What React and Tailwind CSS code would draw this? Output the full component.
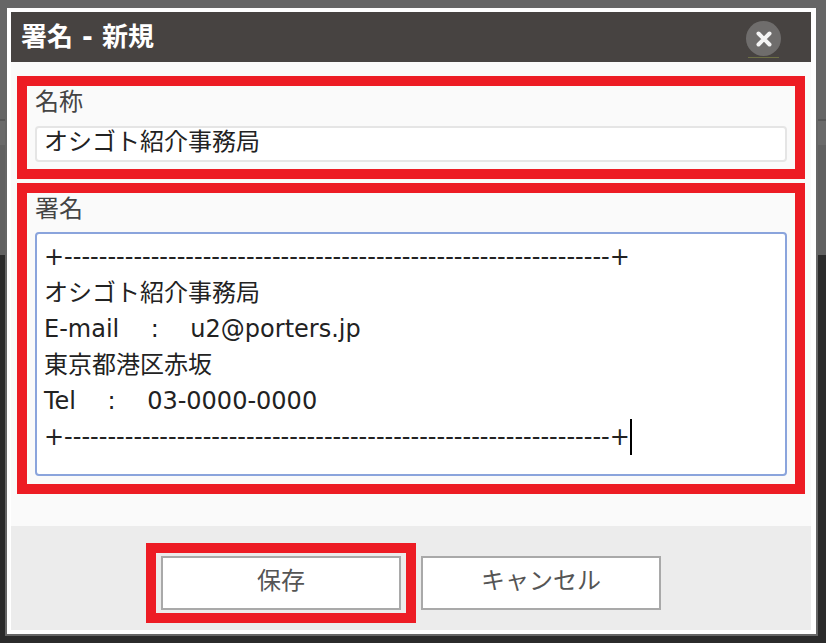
const redBox = 'border-[10px] border-[#ed1c24]';
const actionButton = 'h-[54px] w-[240px] border-2 border-[#a9a9a9] bg-white pb-[4px] text-[24px] text-[#555]';
const dashes = '+' + '-'.repeat(63) + '+';

function Field({ label, boxClass, children }) {
  return (
    <section className={`${redBox} ${boxClass} flex flex-col px-2`}>
      <label className="h-9 text-[24px] leading-[32px] text-[#444]">{label}</label>
      {children}
    </section>
  );
}

function CloseButton() {
  return (
    <button className="relative mt-[3px] flex h-[35px] w-[35px] items-center justify-center rounded-full bg-[#6f6d6c]">
      <svg width="20" height="20" viewBox="0 0 20 20" fill="none" stroke="#f4f4f4" strokeWidth="4" strokeLinecap="round">
        <path d="M4.5 4.5 L15.5 15.5 M15.5 4.5 L4.5 15.5" />
      </svg>
      <span className="absolute -bottom-[2px] left-[2px] h-px w-[31px] bg-[#6d6f45]" />
    </button>
  );
}

export default function App() {
  const lines = [
    dashes,
    'オシゴト紹介事務局',
    'E-mail    :    u2@porters.jp',
    '東京都港区赤坂',
    'Tel    :    03-0000-0000',
  ];

  return (
    <div className="relative flex h-screen flex-col overflow-hidden bg-[#2b2b2b] font-['DejaVu_Sans','Noto_Sans_CJK_JP',sans-serif]">
      {/* dimmed page behind the dialog */}
      <div className="h-[119px] bg-[#666]" />
      <div className="h-[2px] bg-[#575757]" />
      <div className="h-[24px] bg-[#6a6a6a]" />
      <div className="h-[110px] bg-[#616161]" />

      <div className="absolute left-[5px] top-[6px] h-[630px] w-[813px] border-2 border-[#666] bg-white pt-1 pr-[5px] pb-1 pl-1">
        <div className="flex h-full flex-col bg-[#fafafa]">
          <header className="flex h-[50px] shrink-0 items-center justify-between bg-[#474341] pr-[30px] pl-[10px]">
            <h1 className="text-[26px] font-bold text-white">署名 - 新規</h1>
            <CloseButton />
          </header>

          <div className="flex flex-1 flex-col gap-1 px-[6px] pt-[14px]">
            <Field label="名称" boxClass="h-[103px] w-[788px]">
              <input
                readOnly
                value="オシゴト紹介事務局"
                className="mt-[4px] h-9 w-full rounded border-2 border-[#e5e5e5] bg-white px-[7px] pb-1 text-[24px] text-[#222] outline-none"
              />
            </Field>
            <Field label="署名" boxClass="h-[311px] w-[788px]">
              <div className="mt-[3px] h-[244px] w-full rounded border-2 border-[#8aa4dc] bg-white px-[7px] pt-[5px] text-[24px] leading-[36px] [word-spacing:0.25px] text-[#222]">
                {lines.map((line) => (
                  <div key={line} className="whitespace-pre">{line}</div>
                ))}
                <div className="flex whitespace-pre">
                  {dashes}
                  <span className="h-9 w-0.5 bg-black" />
                </div>
              </div>
            </Field>
          </div>

          <footer className="flex h-[104px] shrink-0 items-center gap-[5px] bg-[#ececec] pt-[10px] pl-[135px]">
            <div className={`${redBox} px-[5px] py-[3px]`}>
              <button className={`${actionButton} block`}>保存</button>
            </div>
            <button className={actionButton}>キャンセル</button>
          </footer>
        </div>
      </div>
    </div>
  );
}
